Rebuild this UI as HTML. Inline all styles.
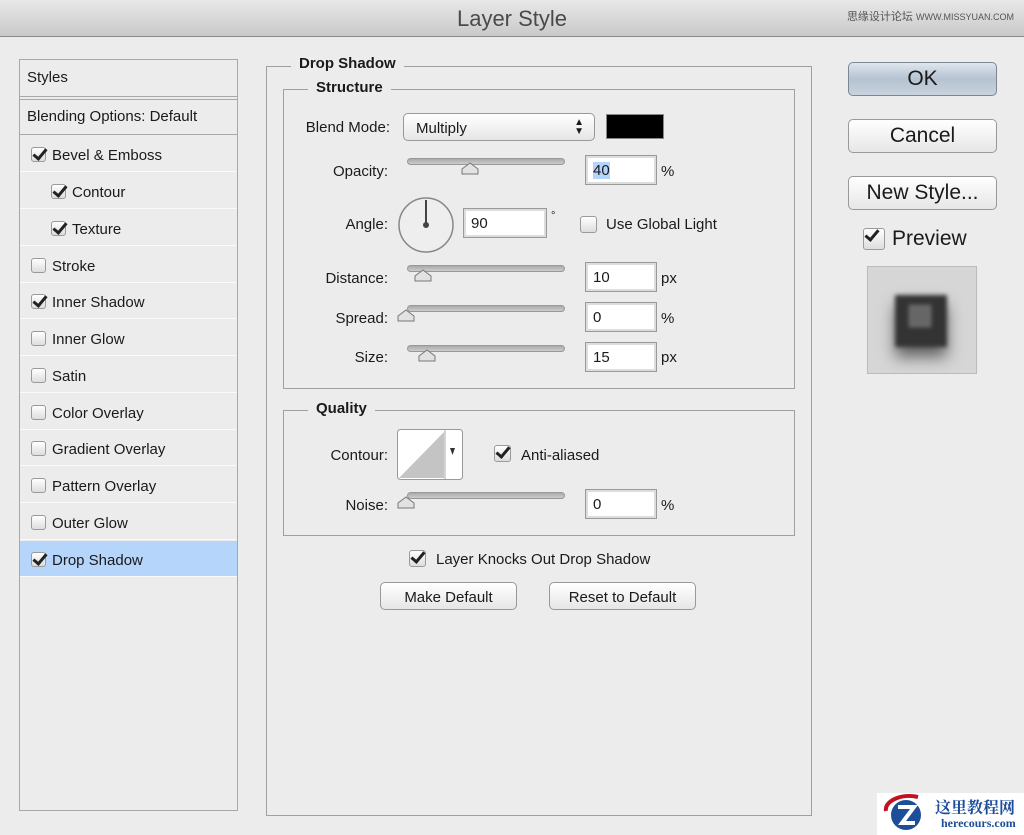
<!DOCTYPE html>
<html><head><meta charset="utf-8">
<style>
*{margin:0;padding:0;box-sizing:border-box}
body{width:1024px;height:835px;background:#ececec;font-family:"Liberation Sans","Noto Sans CJK SC",sans-serif;color:#1a1a1a;position:relative;overflow:hidden;font-size:15px}
.a{position:absolute}
.title{left:0;top:0;width:1024px;height:37px;background:linear-gradient(#e8e8e8,#c9c9c9);border-bottom:1px solid #8a8a8a}
.title .t{position:absolute;left:0;width:1024px;text-align:center;top:6px;font-size:22px;color:#4a4a4a}
.wm{right:10px;top:8px;font-size:11px;color:#555}
.list{left:19px;top:59px;width:219px;height:752px;border:1px solid #a8a8a8;background:#ececec}
.row{position:absolute;left:0;width:217px;height:36px;border-bottom:1px solid #fafafa;font-size:15px}
.row span{position:absolute;top:11px}
.cb{position:absolute;width:15px;height:15px;border:1px solid #9a9a9a;border-radius:3px;background:linear-gradient(#fff,#ddd)}
.cb.on::after{content:"";position:absolute;left:4px;top:-2px;width:5px;height:11px;border:solid #222;border-width:0 3px 3px 0;transform:rotate(40deg)}
.fs{border:1px solid #a0a0a0}
.lg{background:#ececec;font-weight:bold;padding:0 8px;font-size:15px}
.lbl{text-align:right;width:120px;font-size:15px}
.sl{height:7px;width:158px;border-radius:4px;background:linear-gradient(#aaa,#ccc);border:1px solid #999}
.th{width:18px;height:13px}
.in{width:72px;height:30px;background:#fff;border:1px solid #999;box-shadow:inset 0 0 0 2px #ddd;padding:6px 0 0 7px;font-size:15px}
.btn{border:1px solid #999;border-radius:5px;background:linear-gradient(#fff,#e6e6e6);text-align:center}
</style></head><body>
<div class="a title"><div class="t">Layer Style</div><div class="a wm">思缘设计论坛 <span style="font-size:9px">WWW.MISSYUAN.COM</span></div></div>

<div class="a list">
 <div class="row" style="top:0;height:37px;border-bottom:1px solid #a8a8a8"><span style="left:7px;top:9px">Styles</span></div>
 <div class="row" style="top:39px;height:36px;border-top:1px solid #a8a8a8;border-bottom:1px solid #a8a8a8"><span style="left:7px;top:8px">Blending Options: Default</span></div>
 <div class="row" style="top:76px"><i class="cb on" style="left:11px;top:11px"></i><span style="left:32px">Bevel &amp; Emboss</span></div>
 <div class="row" style="top:113px"><i class="cb on" style="left:31px;top:11px"></i><span style="left:52px">Contour</span></div>
 <div class="row" style="top:150px"><i class="cb on" style="left:31px;top:11px"></i><span style="left:52px">Texture</span></div>
 <div class="row" style="top:187px"><i class="cb" style="left:11px;top:11px"></i><span style="left:32px">Stroke</span></div>
 <div class="row" style="top:223px"><i class="cb on" style="left:11px;top:11px"></i><span style="left:32px">Inner Shadow</span></div>
 <div class="row" style="top:260px"><i class="cb" style="left:11px;top:11px"></i><span style="left:32px">Inner Glow</span></div>
 <div class="row" style="top:297px"><i class="cb" style="left:11px;top:11px"></i><span style="left:32px">Satin</span></div>
 <div class="row" style="top:334px"><i class="cb" style="left:11px;top:11px"></i><span style="left:32px">Color Overlay</span></div>
 <div class="row" style="top:370px"><i class="cb" style="left:11px;top:11px"></i><span style="left:32px">Gradient Overlay</span></div>
 <div class="row" style="top:407px"><i class="cb" style="left:11px;top:11px"></i><span style="left:32px">Pattern Overlay</span></div>
 <div class="row" style="top:444px"><i class="cb" style="left:11px;top:11px"></i><span style="left:32px">Outer Glow</span></div>
 <div class="row" style="top:481px;background:#b5d5fb"><i class="cb on" style="left:11px;top:11px"></i><span style="left:32px">Drop Shadow</span></div>
</div>

<div class="a fs" style="left:266px;top:66px;width:546px;height:750px"></div>
<div class="a lg" style="left:291px;top:55px">Drop Shadow</div>
<div class="a fs" style="left:283px;top:89px;width:512px;height:300px"></div>
<div class="a lg" style="left:308px;top:79px">Structure</div>

<div class="a lbl" style="left:270px;top:119px">Blend Mode:</div>
<div class="a btn" style="left:403px;top:113px;width:192px;height:28px;text-align:left;padding:6px 12px">Multiply<span style="position:absolute;right:10px;top:4px;font-size:10px;line-height:9px">▲<br>▼</span></div>
<div class="a" style="left:606px;top:114px;width:58px;height:25px;background:#000;border:1px solid #888"></div>

<div class="a lbl" style="left:268px;top:163px">Opacity:</div>
<div class="a sl" style="left:407px;top:158px"></div>
<svg class="a th" style="left:461px;top:162px" viewBox="0 0 18 13"><path d="M1 12V7L9 1l8 6v5z" fill="#e2e2e2" stroke="#777"/></svg>
<div class="a in" style="left:585px;top:155px"><span style="background:#b3d4fc">40</span></div>
<div class="a" style="left:661px;top:163px">%</div>

<div class="a lbl" style="left:268px;top:216px">Angle:</div>
<svg class="a" style="left:397px;top:196px" width="58" height="58"><circle cx="29" cy="29" r="27" fill="#eee" stroke="#888" stroke-width="1.5"/><line x1="29" y1="29" x2="29" y2="4" stroke="#444" stroke-width="2"/><circle cx="29" cy="29" r="3" fill="#444"/></svg>
<div class="a in" style="left:463px;top:208px;width:84px">90</div>
<div class="a" style="left:551px;top:210px;font-size:11px">°</div>
<i class="cb a" style="left:580px;top:216px;width:17px;height:17px"></i>
<div class="a" style="left:606px;top:216px">Use Global Light</div>

<div class="a lbl" style="left:268px;top:270px">Distance:</div>
<div class="a sl" style="left:407px;top:265px"></div>
<svg class="a th" style="left:414px;top:269px" viewBox="0 0 18 13"><path d="M1 12V7L9 1l8 6v5z" fill="#e2e2e2" stroke="#777"/></svg>
<div class="a in" style="left:585px;top:262px">10</div>
<div class="a" style="left:661px;top:270px">px</div>

<div class="a lbl" style="left:268px;top:310px">Spread:</div>
<div class="a sl" style="left:407px;top:305px"></div>
<svg class="a th" style="left:397px;top:309px" viewBox="0 0 18 13"><path d="M1 12V7L9 1l8 6v5z" fill="#e2e2e2" stroke="#777"/></svg>
<div class="a in" style="left:585px;top:302px">0</div>
<div class="a" style="left:661px;top:310px">%</div>

<div class="a lbl" style="left:268px;top:349px">Size:</div>
<div class="a sl" style="left:407px;top:345px"></div>
<svg class="a th" style="left:418px;top:349px" viewBox="0 0 18 13"><path d="M1 12V7L9 1l8 6v5z" fill="#e2e2e2" stroke="#777"/></svg>
<div class="a in" style="left:585px;top:342px">15</div>
<div class="a" style="left:661px;top:349px">px</div>

<div class="a fs" style="left:283px;top:410px;width:512px;height:126px"></div>
<div class="a lg" style="left:308px;top:400px">Quality</div>
<div class="a lbl" style="left:268px;top:447px">Contour:</div>
<svg class="a" style="left:397px;top:429px" width="66" height="51"><rect x=".5" y=".5" width="65" height="50" rx="3" fill="#fff" stroke="#999"/><path d="M2 49L47 3V49z" fill="#c4c4c4"/><line x1="48" y1="1" x2="48" y2="50" stroke="#aaa"/><path d="M53 19h5l-2.5 7z" fill="#333"/></svg>
<i class="cb on a" style="left:494px;top:445px;width:17px;height:17px"></i>
<div class="a" style="left:521px;top:447px">Anti-aliased</div>
<div class="a lbl" style="left:268px;top:497px">Noise:</div>
<div class="a sl" style="left:407px;top:492px"></div>
<svg class="a th" style="left:397px;top:496px" viewBox="0 0 18 13"><path d="M1 12V7L9 1l8 6v5z" fill="#e2e2e2" stroke="#777"/></svg>
<div class="a in" style="left:585px;top:489px">0</div>
<div class="a" style="left:661px;top:497px">%</div>

<i class="cb on a" style="left:409px;top:550px;width:17px;height:17px"></i>
<div class="a" style="left:436px;top:551px">Layer Knocks Out Drop Shadow</div>
<div class="a btn" style="left:380px;top:582px;width:137px;height:28px;padding-top:6px">Make Default</div>
<div class="a btn" style="left:549px;top:582px;width:147px;height:28px;padding-top:6px">Reset to Default</div>

<div class="a btn" style="left:848px;top:62px;width:149px;height:34px;font-size:21px;padding-top:4px;background:linear-gradient(#dfe6ef,#b5c2d1 50%,#c9d3de);border-color:#7d8794">OK</div>
<div class="a btn" style="left:848px;top:119px;width:149px;height:34px;font-size:21px;padding-top:4px">Cancel</div>
<div class="a btn" style="left:848px;top:176px;width:149px;height:34px;font-size:21px;padding-top:4px">New Style...</div>
<i class="cb on a" style="left:863px;top:228px;width:22px;height:22px"></i>
<div class="a" style="left:892px;top:227px;font-size:21px">Preview</div>
<div class="a" style="left:867px;top:266px;width:110px;height:108px;background:#d6d6d6;border:1px solid #bbb;overflow:hidden">
 <div class="a" style="left:27px;top:28px;width:52px;height:52px;background:#333;filter:blur(2px);box-shadow:0 10px 14px rgba(0,0,0,.55)"><div class="a" style="left:14px;top:10px;width:22px;height:22px;background:#666;border:1px solid #888"></div></div>
</div>

<div class="a" style="left:877px;top:793px;width:147px;height:42px;background:#fff"></div>
<svg class="a" style="left:878px;top:793px" width="56" height="40"><path d="M8 18C6 8 24 0 40 4" stroke="#c1121f" stroke-width="4" fill="none"/><circle cx="28" cy="22" r="15" fill="#1d4e9a"/><path d="M20 14h16l-12 16h13" stroke="#fff" stroke-width="4" fill="none"/></svg>
<div class="a" style="left:935px;top:795px;font-size:16px;font-weight:bold;color:#1d4e9a;font-family:'Noto Serif CJK SC',serif">这里教程网</div>
<div class="a" style="left:941px;top:816px;font-size:12px;font-weight:bold;color:#1d4e9a;font-family:'Liberation Serif',serif">herecours.com</div>
</body></html>
